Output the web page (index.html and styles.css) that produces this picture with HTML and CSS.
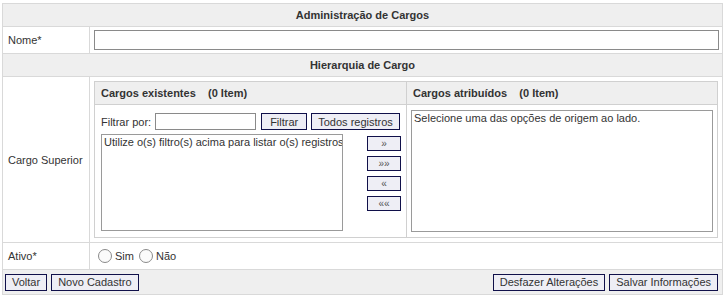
FILE: index.html
```html
<!DOCTYPE html>
<html>
<head>
    <title>Administração de Cargos</title>
    <link rel="stylesheet" href="styles.css">
</head>
<body>
    <table class="form">
        <tr>
            <th colspan="2" class="title">Administração de Cargos</th>
        </tr>
        <tr class="row">
            <td class="label">Nome*</td>
            <td class="field"><input type="text" class="text-full" id="nome"></td>
        </tr>
        <tr>
            <th colspan="2" class="title">Hierarquia de Cargo</th>
        </tr>
        <tr class="row-picker">
            <td class="label">Cargo Superior</td>
            <td class="field">
                <table class="picker">
                    <tr>
                        <th class="picker-head">Cargos existentes&nbsp;&nbsp;&nbsp; (0 Item)</th>
                        <th class="picker-head">Cargos atribuídos&nbsp;&nbsp;&nbsp; (0 Item)</th>
                    </tr>
                    <tr>
                        <td class="source">
                            <div class="filter">
                                <span>Filtrar por:</span>
                                <input type="text" class="text-filter" id="filtro">
                                <button class="btn btn-filter">Filtrar</button>
                                <button class="btn">Todos registros</button>
                            </div>
                            <div class="source-body">
                                <div class="list list-source">Utilize o(s) filtro(s) acima para listar o(s) registros</div>
                                <div class="arrows">
                                    <button class="btn-arrow">&raquo;</button>
                                    <button class="btn-arrow">&raquo;&raquo;</button>
                                    <button class="btn-arrow">&laquo;</button>
                                    <button class="btn-arrow">&laquo;&laquo;</button>
                                </div>
                            </div>
                        </td>
                        <td class="target">
                            <div class="list list-target">Selecione uma das opções de origem ao lado.</div>
                        </td>
                    </tr>
                </table>
            </td>
        </tr>
        <tr class="row">
            <td class="label">Ativo*</td>
            <td class="field">
                <div class="radios">
                    <label><input type="radio" name="ativo" value="1"> Sim</label>
                    <label><input type="radio" name="ativo" value="0"> Não</label>
                </div>
            </td>
        </tr>
        <tr>
            <td colspan="2" class="actions">
                <div class="action-bar">
                    <div class="action-group">
                        <button class="btn">Voltar</button>
                        <button class="btn">Novo Cadastro</button>
                    </div>
                    <div class="action-group">
                        <button class="btn">Desfazer Alterações</button>
                        <button class="btn">Salvar Informações</button>
                    </div>
                </div>
            </td>
        </tr>
    </table>
</body>
</html>
```

FILE: styles.css
```css
body {
    margin: 3px 3px 0 2px;
    font-family: "Liberation Sans", Arial, sans-serif;
    font-size: 11px;
    color: #333;
    background-color: #fff;
}

.form {
    width: 100%;
    border-collapse: collapse;
}

.form > tbody > tr > td,
.form > tbody > tr > th {
    border: 1px solid #d9d9d9;
}

.title {
    height: 22px;
    padding: 0;
    background-color: #efefef;
    font-weight: bold;
    text-align: center;
}

.row td {
    height: 26px;
}

.label {
    width: 81px;
    padding: 0 0 0 5px;
}

.field {
    padding: 0 3px 0 4px;
}

.text-full {
    display: block;
    box-sizing: border-box;
    width: 100%;
    height: 20px;
    margin: 0;
    border: 1px solid #8a8a8a;
}

/* Hierarquia: lista de origem e destino */
.row-picker td.field {
    padding: 4px 4px 4px 4px;
}

.picker {
    width: 100%;
    border-collapse: collapse;
}

.picker td,
.picker th {
    border: 1px solid #d0d0d0;
}

.picker-head {
    height: 22px;
    padding: 0 0 0 6px;
    background-color: #efefef;
    text-align: left;
    white-space: pre;
}

.source {
    width: 305px;
    height: 132px;
    padding: 0 0 0 6px;
    vertical-align: top;
}

.filter {
    display: flex;
    align-items: center;
    margin-top: 8px;
}

.filter span {
    margin-right: 4px;
}

.text-filter {
    box-sizing: border-box;
    width: 101px;
    height: 17px;
    margin: 0 5px 0 0;
    border: 1px solid #8a8a8a;
}

.btn {
    height: 17px;
    padding: 0 6px;
    margin: 0;
    font-family: "Liberation Sans", Arial, sans-serif;
    font-size: 11px;
    color: #333;
    background-color: #eeeef5;
    border: 1px solid #10104a;
    border-radius: 0;
}

.btn-filter {
    padding: 0 8px;
    margin-right: 4px;
}

.source-body {
    display: flex;
    margin-top: 4px;
}

.list {
    box-sizing: border-box;
    padding: 1px 2px;
    border: 1px solid #9a9a9a;
    background-color: #fff;
    white-space: nowrap;
    overflow: hidden;
    line-height: 13px;
}

.list-source {
    width: 242px;
    height: 97px;
}

.arrows {
    display: flex;
    flex-direction: column;
    gap: 5px;
    margin: 2px 0 0 24px;
}

.btn-arrow {
    width: 34px;
    height: 15px;
    padding: 0;
    margin: 0;
    font-family: "Liberation Sans", Arial, sans-serif;
    font-size: 10px;
    line-height: 10px;
    color: #555;
    background-color: #eeeef5;
    border: 1px solid #10104a;
    border-radius: 0;
}

.target {
    padding: 5px 4px 0 4px;
    vertical-align: top;
}

.list-target {
    width: 100%;
    height: 122px;
}

/* Ativo */
.radios {
    display: flex;
    gap: 5px;
    padding-left: 4px;
}

.radios label {
    display: flex;
    align-items: center;
}

.radios input {
    appearance: none;
    width: 14px;
    height: 14px;
    margin: 0 3px 0 0;
    border: 1px solid #8a8a8a;
    border-radius: 50%;
    background-color: #fbfbfb;
}

/* Barra de botões */
.actions {
    height: 24px;
    padding: 0 4px 0 2px;
    background-color: #efefef;
}

.action-bar {
    display: flex;
    justify-content: space-between;
}

.action-group {
    display: flex;
    gap: 4px;
}
```
